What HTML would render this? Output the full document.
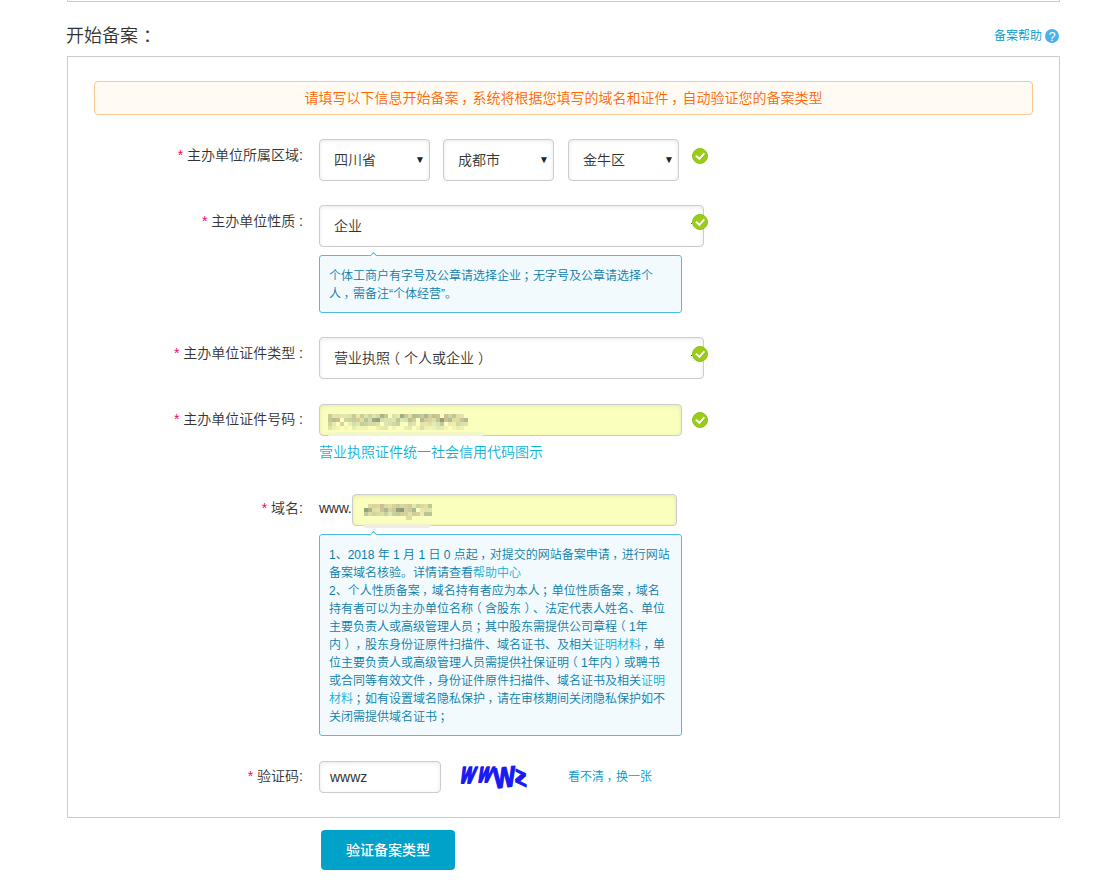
<!DOCTYPE html>
<html lang="zh-CN">
<head>
<meta charset="utf-8">
<title>开始备案</title>
<style>
*{box-sizing:border-box;margin:0;padding:0}
html,body{width:1105px;height:893px;background:#fff;overflow:hidden}
body{position:relative;font-family:"Liberation Sans","Noto Sans CJK SC",sans-serif;font-size:13px;color:#333;font-weight:350}
.abs{position:absolute}
.p{position:relative}
.pc{left:.2em}
.pl{left:-.28em}
.pr{left:.28em}
.topline{left:67px;top:0;width:993px;height:2px;border-bottom:1px solid #ccc;border-left:1px solid #ccc;border-right:1px solid #ccc}
h2{position:absolute;left:66px;top:22px;font-size:18px;font-weight:350;color:#333;line-height:28px;white-space:nowrap}
.help{position:absolute;left:994px;top:27px;font-size:12px;color:#09c;line-height:18px;white-space:nowrap}
.qicon{position:absolute;left:1045px;top:29px;width:14px;height:14px}
.box{position:absolute;left:67px;top:56px;width:993px;height:762px;border:1px solid #ccc;background:#fff}
.alert{position:absolute;left:94px;top:81px;width:939px;height:34px;border:1px solid #fbc890;border-radius:4px;background:#fffbf4;color:#f60;font-size:14px;line-height:32px;text-align:center;white-space:nowrap}
.lbl{position:absolute;right:802px;font-size:14px;line-height:20px;color:#333;white-space:nowrap;text-align:right}
.lbl i{font-style:normal;color:#f06}
.sel{position:absolute;top:139px;height:42px;border:1px solid #ccc;border-radius:4px;background:#fff;box-shadow:inset 0 1px 4px rgba(0,0,0,.09);font-size:14px;line-height:40px;padding-left:14px;color:#333;white-space:nowrap}
.sel b{position:absolute;right:4px;top:0;font-size:10px;font-weight:400;color:#222}
.inp{position:absolute;border:1px solid #ccc;border-radius:4px;background:#fff;font-size:14px;color:#333;padding-left:13px;white-space:nowrap;box-shadow:inset 0 1px 4px rgba(0,0,0,.09)}
.yel{background:#faffbd}
.ok{position:absolute;width:16px;height:16px}
.tip{position:absolute;left:319px;width:363px;border:1px solid #4dbde8;border-radius:3px;background:#f2fafe;color:#0c7ca8;font-size:12px;line-height:18px;padding:11px 0 0 9px;white-space:nowrap;text-spacing-trim:space-all}
.tip a{color:#0bb3d9;text-decoration:none}
.tip:before{content:"";position:absolute;left:51px;top:-3px;width:4px;height:4px;background:#fff;border-left:1px solid #4dbde8;border-top:1px solid #4dbde8;transform:rotate(45deg)}
.lnk{position:absolute;color:#0bb3d9;font-size:14px;line-height:20px;white-space:nowrap}
.btn{position:absolute;left:321px;top:830px;width:134px;height:40px;border-radius:4px;background:#00a2ca;color:#fff;font-size:14px;font-weight:500;line-height:40px;text-align:center;white-space:nowrap}
</style>
</head>
<body>
<div class="abs topline"></div>
<h2>开始备案<span class="p pr">：</span></h2>
<div class="help">备案帮助</div>
<svg class="qicon" viewBox="0 0 14 14"><circle cx="7" cy="7" r="7" fill="#4ab2ea"/><text x="7" y="11.7" font-size="13" font-weight="400" text-anchor="middle" fill="#fff" font-family="Liberation Sans, sans-serif">?</text></svg>
<div class="box"></div>
<div class="alert">请填写以下信息开始备案<span class="p pc">，</span>系统将根据您填写的域名和证件<span class="p pc">，</span>自动验证您的备案类型</div>

<div class="lbl" style="top:145px"><i>*</i> 主办单位所属区域:</div>
<div class="sel" style="left:319px;width:111px">四川省<b>▼</b></div>
<div class="sel" style="left:443px;width:111px">成都市<b>▼</b></div>
<div class="sel" style="left:568px;width:111px">金牛区<b>▼</b></div>

<div class="lbl" style="top:211px"><i>*</i> 主办单位性质 :</div>
<div class="inp" style="left:319px;top:205px;width:385px;height:42px;line-height:40px;padding-left:14px">企业</div>
<div class="tip" style="top:255px;height:58px">个体工商户有字号及公章请选择企业<span class="p pc">；</span>无字号及公章请选择个<br>
人<span class="p pc">，</span>需备注“个体经营”。</div>

<div class="lbl" style="top:343px"><i>*</i> 主办单位证件类型 :</div>
<div class="inp" style="left:319px;top:337px;width:385px;height:42px;line-height:40px;padding-left:14px">营业执照<span class="p pl">（</span>个人或企业<span class="p pr">）</span></div>

<div class="lbl" style="top:409px"><i>*</i> 主办单位证件号码 :</div>
<div class="inp yel" style="left:319px;top:404px;width:363px;height:32px;line-height:30px"></div>
<svg class="abs" style="left:328px;top:414px" width="140" height="16" viewBox="0 0 140 16" shape-rendering="crispEdges"><rect x="0" y="0" width="4" height="4" fill="#a9b287" opacity="0.64"/><rect x="4" y="0" width="4" height="4" fill="#d9cc8e" opacity="0.54"/><rect x="8" y="0" width="4" height="4" fill="#d9cc8e" opacity="0.58"/><rect x="12" y="0" width="4" height="4" fill="#c8cf9e" opacity="0.53"/><rect x="16" y="0" width="4" height="4" fill="#c8cf9e" opacity="0.53"/><rect x="20" y="0" width="4" height="4" fill="#d7d59c" opacity="0.72"/><rect x="24" y="0" width="4" height="4" fill="#b5b48a" opacity="0.71"/><rect x="28" y="0" width="4" height="4" fill="#d7d59c" opacity="0.53"/><rect x="32" y="0" width="4" height="4" fill="#bfae86" opacity="0.65"/><rect x="36" y="0" width="4" height="4" fill="#b9d6b0" opacity="0.61"/><rect x="40" y="0" width="4" height="4" fill="#a9b287" opacity="0.55"/><rect x="44" y="0" width="4" height="4" fill="#d7d59c" opacity="0.64"/><rect x="48" y="0" width="4" height="4" fill="#c9c796" opacity="0.70"/><rect x="52" y="0" width="4" height="4" fill="#8f9a78" opacity="0.74"/><rect x="56" y="0" width="4" height="4" fill="#9fb08a" opacity="0.67"/><rect x="64" y="0" width="4" height="4" fill="#d7d59c" opacity="0.78"/><rect x="68" y="0" width="4" height="4" fill="#d7d59c" opacity="0.54"/><rect x="72" y="0" width="4" height="4" fill="#8f9a78" opacity="0.81"/><rect x="76" y="0" width="4" height="4" fill="#bfae86" opacity="0.72"/><rect x="80" y="0" width="4" height="4" fill="#d9cc8e" opacity="0.65"/><rect x="84" y="0" width="4" height="4" fill="#a9b287" opacity="0.83"/><rect x="88" y="0" width="4" height="4" fill="#7f8f72" opacity="0.54"/><rect x="92" y="0" width="4" height="4" fill="#9fb08a" opacity="0.63"/><rect x="96" y="0" width="4" height="4" fill="#8f9a78" opacity="0.71"/><rect x="100" y="0" width="4" height="4" fill="#c9c796" opacity="0.83"/><rect x="104" y="0" width="4" height="4" fill="#7f8f72" opacity="0.53"/><rect x="108" y="0" width="4" height="4" fill="#bfae86" opacity="0.73"/><rect x="116" y="0" width="4" height="4" fill="#bfae86" opacity="0.75"/><rect x="120" y="0" width="4" height="4" fill="#9fb08a" opacity="0.52"/><rect x="124" y="0" width="4" height="4" fill="#a9b287" opacity="0.72"/><rect x="128" y="0" width="4" height="4" fill="#d7d59c" opacity="0.77"/><rect x="132" y="0" width="4" height="4" fill="#d7d59c" opacity="0.65"/><rect x="0" y="4" width="4" height="4" fill="#a9b287" opacity="0.70"/><rect x="4" y="4" width="4" height="4" fill="#a9b287" opacity="0.83"/><rect x="8" y="4" width="4" height="4" fill="#bfae86" opacity="0.79"/><rect x="16" y="4" width="4" height="4" fill="#c8cf9e" opacity="0.88"/><rect x="20" y="4" width="4" height="4" fill="#a9b287" opacity="0.59"/><rect x="24" y="4" width="4" height="4" fill="#b5b48a" opacity="0.71"/><rect x="28" y="4" width="4" height="4" fill="#bfae86" opacity="0.64"/><rect x="32" y="4" width="4" height="4" fill="#d9cc8e" opacity="0.67"/><rect x="36" y="4" width="4" height="4" fill="#a9b287" opacity="0.79"/><rect x="40" y="4" width="4" height="4" fill="#b9d6b0" opacity="0.78"/><rect x="44" y="4" width="4" height="4" fill="#8f9a78" opacity="0.86"/><rect x="48" y="4" width="4" height="4" fill="#7f8f72" opacity="0.83"/><rect x="52" y="4" width="4" height="4" fill="#c8cf9e" opacity="0.68"/><rect x="56" y="4" width="4" height="4" fill="#c8cf9e" opacity="0.56"/><rect x="60" y="4" width="4" height="4" fill="#d7d59c" opacity="0.70"/><rect x="64" y="4" width="4" height="4" fill="#b9d6b0" opacity="0.56"/><rect x="68" y="4" width="4" height="4" fill="#a9b287" opacity="0.73"/><rect x="72" y="4" width="4" height="4" fill="#b9d6b0" opacity="0.55"/><rect x="76" y="4" width="4" height="4" fill="#b9d6b0" opacity="0.68"/><rect x="80" y="4" width="4" height="4" fill="#9fb08a" opacity="0.76"/><rect x="84" y="4" width="4" height="4" fill="#c9c796" opacity="0.85"/><rect x="92" y="4" width="4" height="4" fill="#8f9a78" opacity="0.65"/><rect x="96" y="4" width="4" height="4" fill="#c2b48c" opacity="0.66"/><rect x="100" y="4" width="4" height="4" fill="#c2b48c" opacity="0.60"/><rect x="104" y="4" width="4" height="4" fill="#d9cc8e" opacity="0.67"/><rect x="108" y="4" width="4" height="4" fill="#b5b48a" opacity="0.81"/><rect x="112" y="4" width="4" height="4" fill="#7f8f72" opacity="0.85"/><rect x="116" y="4" width="4" height="4" fill="#bfae86" opacity="0.73"/><rect x="120" y="4" width="4" height="4" fill="#9fb08a" opacity="0.82"/><rect x="124" y="4" width="4" height="4" fill="#d9cc8e" opacity="0.66"/><rect x="128" y="4" width="4" height="4" fill="#d7d59c" opacity="0.83"/><rect x="132" y="4" width="4" height="4" fill="#c2b48c" opacity="0.83"/><rect x="136" y="4" width="4" height="4" fill="#8f9a78" opacity="0.67"/><rect x="0" y="8" width="4" height="4" fill="#b5b48a" opacity="0.55"/><rect x="4" y="8" width="4" height="4" fill="#d7d59c" opacity="0.53"/><rect x="12" y="8" width="4" height="4" fill="#c2b48c" opacity="0.60"/><rect x="20" y="8" width="4" height="4" fill="#d7d59c" opacity="0.38"/><rect x="24" y="8" width="4" height="4" fill="#9fb08a" opacity="0.41"/><rect x="28" y="8" width="4" height="4" fill="#b9d6b0" opacity="0.56"/><rect x="32" y="8" width="4" height="4" fill="#7f8f72" opacity="0.44"/><rect x="36" y="8" width="4" height="4" fill="#7f8f72" opacity="0.39"/><rect x="40" y="8" width="4" height="4" fill="#c2b48c" opacity="0.54"/><rect x="44" y="8" width="4" height="4" fill="#a9b287" opacity="0.46"/><rect x="48" y="8" width="4" height="4" fill="#c9c796" opacity="0.55"/><rect x="56" y="8" width="4" height="4" fill="#c8cf9e" opacity="0.54"/><rect x="60" y="8" width="4" height="4" fill="#a9b287" opacity="0.40"/><rect x="64" y="8" width="4" height="4" fill="#a9b287" opacity="0.50"/><rect x="68" y="8" width="4" height="4" fill="#7f8f72" opacity="0.40"/><rect x="80" y="8" width="4" height="4" fill="#9fb08a" opacity="0.40"/><rect x="84" y="8" width="4" height="4" fill="#b5b48a" opacity="0.36"/><rect x="92" y="8" width="4" height="4" fill="#d9cc8e" opacity="0.54"/><rect x="96" y="8" width="4" height="4" fill="#d7d59c" opacity="0.56"/><rect x="100" y="8" width="4" height="4" fill="#bfae86" opacity="0.41"/><rect x="104" y="8" width="4" height="4" fill="#b9d6b0" opacity="0.44"/><rect x="108" y="8" width="4" height="4" fill="#a9b287" opacity="0.37"/><rect x="112" y="8" width="4" height="4" fill="#8f9a78" opacity="0.52"/><rect x="120" y="8" width="4" height="4" fill="#d9cc8e" opacity="0.39"/><rect x="124" y="8" width="4" height="4" fill="#d9cc8e" opacity="0.36"/><rect x="128" y="8" width="4" height="4" fill="#a9b287" opacity="0.51"/><rect x="132" y="8" width="4" height="4" fill="#a9b287" opacity="0.40"/><rect x="136" y="8" width="4" height="4" fill="#c2b48c" opacity="0.39"/><rect x="0" y="12" width="4" height="4" fill="#7f8f72" opacity="0.24"/><rect x="4" y="12" width="4" height="4" fill="#c9c796" opacity="0.29"/><rect x="8" y="12" width="4" height="4" fill="#d7d59c" opacity="0.21"/><rect x="16" y="12" width="4" height="4" fill="#d9cc8e" opacity="0.18"/><rect x="24" y="12" width="4" height="4" fill="#9fb08a" opacity="0.25"/><rect x="28" y="12" width="4" height="4" fill="#d9cc8e" opacity="0.20"/><rect x="32" y="12" width="4" height="4" fill="#d9cc8e" opacity="0.24"/><rect x="36" y="12" width="4" height="4" fill="#d7d59c" opacity="0.26"/><rect x="48" y="12" width="4" height="4" fill="#d9cc8e" opacity="0.29"/><rect x="52" y="12" width="4" height="4" fill="#8f9a78" opacity="0.20"/><rect x="56" y="12" width="4" height="4" fill="#8f9a78" opacity="0.22"/><rect x="64" y="12" width="4" height="4" fill="#d7d59c" opacity="0.26"/><rect x="76" y="12" width="4" height="4" fill="#c2b48c" opacity="0.26"/><rect x="80" y="12" width="4" height="4" fill="#bfae86" opacity="0.29"/><rect x="88" y="12" width="4" height="4" fill="#c9c796" opacity="0.23"/><rect x="92" y="12" width="4" height="4" fill="#7f8f72" opacity="0.28"/><rect x="96" y="12" width="4" height="4" fill="#c8cf9e" opacity="0.30"/><rect x="100" y="12" width="4" height="4" fill="#c8cf9e" opacity="0.20"/><rect x="104" y="12" width="4" height="4" fill="#c2b48c" opacity="0.22"/><rect x="108" y="12" width="4" height="4" fill="#8f9a78" opacity="0.23"/><rect x="112" y="12" width="4" height="4" fill="#9fb08a" opacity="0.24"/><rect x="116" y="12" width="4" height="4" fill="#c9c796" opacity="0.19"/><rect x="124" y="12" width="4" height="4" fill="#c9c796" opacity="0.19"/><rect x="128" y="12" width="4" height="4" fill="#a9b287" opacity="0.21"/><rect x="132" y="12" width="4" height="4" fill="#c8cf9e" opacity="0.28"/></svg>
<div class="abs" style="left:327px;top:432px;width:157px;height:4px;background:#f3f6c6;border-radius:0 0 3px 3px"></div>
<div class="lnk" style="left:319px;top:442px">营业执照证件统一社会信用代码图示</div>

<div class="lbl" style="top:498px"><i>*</i> 域名:</div>
<div class="lnk" style="left:319px;top:498px;color:#333;letter-spacing:-.25px">www.</div>
<div class="abs" style="left:372px;top:528px;width:4px;height:5px;background:#e6f4fc"></div>
<div class="inp yel" style="left:352px;top:494px;width:325px;height:32px;line-height:30px"></div>
<svg class="abs" style="left:364px;top:504px" width="68" height="12" viewBox="0 0 68 12" shape-rendering="crispEdges"><rect x="4" y="0" width="4" height="4" fill="#d9cc8e" opacity="0.77"/><rect x="8" y="0" width="4" height="4" fill="#c2b48c" opacity="0.58"/><rect x="12" y="0" width="4" height="4" fill="#c2b48c" opacity="0.54"/><rect x="16" y="0" width="4" height="4" fill="#bfae86" opacity="0.78"/><rect x="20" y="0" width="4" height="4" fill="#bfae86" opacity="0.51"/><rect x="24" y="0" width="4" height="4" fill="#c9c796" opacity="0.56"/><rect x="28" y="0" width="4" height="4" fill="#b5b48a" opacity="0.59"/><rect x="32" y="0" width="4" height="4" fill="#bfae86" opacity="0.68"/><rect x="36" y="0" width="4" height="4" fill="#c2b48c" opacity="0.56"/><rect x="40" y="0" width="4" height="4" fill="#a9b287" opacity="0.56"/><rect x="44" y="0" width="4" height="4" fill="#bfae86" opacity="0.68"/><rect x="48" y="0" width="4" height="4" fill="#d7d59c" opacity="0.57"/><rect x="52" y="0" width="4" height="4" fill="#a9b287" opacity="0.57"/><rect x="56" y="0" width="4" height="4" fill="#bfae86" opacity="0.49"/><rect x="60" y="0" width="4" height="4" fill="#d9cc8e" opacity="0.66"/><rect x="64" y="0" width="4" height="4" fill="#8f9a78" opacity="0.56"/><rect x="0" y="4" width="4" height="4" fill="#7f8f72" opacity="0.83"/><rect x="4" y="4" width="4" height="4" fill="#8f9a78" opacity="0.74"/><rect x="8" y="4" width="4" height="4" fill="#d9cc8e" opacity="0.65"/><rect x="12" y="4" width="4" height="4" fill="#d7d59c" opacity="0.66"/><rect x="16" y="4" width="4" height="4" fill="#c2b48c" opacity="0.80"/><rect x="20" y="4" width="4" height="4" fill="#9fb08a" opacity="0.89"/><rect x="24" y="4" width="4" height="4" fill="#b5b48a" opacity="0.57"/><rect x="28" y="4" width="4" height="4" fill="#bfae86" opacity="0.70"/><rect x="32" y="4" width="4" height="4" fill="#7f8f72" opacity="0.84"/><rect x="36" y="4" width="4" height="4" fill="#7f8f72" opacity="0.89"/><rect x="40" y="4" width="4" height="4" fill="#c2b48c" opacity="0.65"/><rect x="44" y="4" width="4" height="4" fill="#a9b287" opacity="0.64"/><rect x="48" y="4" width="4" height="4" fill="#9fb08a" opacity="0.89"/><rect x="56" y="4" width="4" height="4" fill="#d7d59c" opacity="0.55"/><rect x="60" y="4" width="4" height="4" fill="#d7d59c" opacity="0.67"/><rect x="64" y="4" width="4" height="4" fill="#c8cf9e" opacity="0.57"/><rect x="0" y="8" width="4" height="4" fill="#7f8f72" opacity="0.48"/><rect x="4" y="8" width="4" height="4" fill="#b5b48a" opacity="0.45"/><rect x="8" y="8" width="4" height="4" fill="#a9b287" opacity="0.53"/><rect x="12" y="8" width="4" height="4" fill="#b5b48a" opacity="0.50"/><rect x="16" y="8" width="4" height="4" fill="#c9c796" opacity="0.58"/><rect x="20" y="8" width="4" height="4" fill="#a9b287" opacity="0.60"/><rect x="24" y="8" width="4" height="4" fill="#b9d6b0" opacity="0.53"/><rect x="28" y="8" width="4" height="4" fill="#8f9a78" opacity="0.46"/><rect x="32" y="8" width="4" height="4" fill="#7f8f72" opacity="0.46"/><rect x="36" y="8" width="4" height="4" fill="#c2b48c" opacity="0.67"/><rect x="40" y="8" width="4" height="4" fill="#c2b48c" opacity="0.62"/><rect x="44" y="8" width="4" height="4" fill="#d9cc8e" opacity="0.63"/><rect x="48" y="8" width="4" height="4" fill="#b5b48a" opacity="0.65"/><rect x="52" y="8" width="4" height="4" fill="#c2b48c" opacity="0.61"/><rect x="56" y="8" width="4" height="4" fill="#d7d59c" opacity="0.44"/><rect x="60" y="8" width="4" height="4" fill="#7f8f72" opacity="0.52"/><rect x="64" y="8" width="4" height="4" fill="#8f9a78" opacity="0.58"/></svg>
<div class="abs" style="left:363px;top:524px;width:68px;height:4px;background:#efefdc;border-radius:0 0 3px 3px"></div><div class="abs" style="left:406px;top:516px;width:6px;height:4px;background:#dcdca8"></div>
<div class="tip" style="top:534px;height:202px">1、2018 年 1 月 1 日 0 点起<span class="p pc">，</span>对提交的网站备案申请<span class="p pc">，</span>进行网站<br>
备案域名核验。详情请查看<a>帮助中心</a><br>
2、个人性质备案<span class="p pc">，</span>域名持有者应为本人<span class="p pc">；</span>单位性质备案<span class="p pc">，</span>域名<br>
持有者可以为主办单位名称<span class="p pl">（</span>含股东<span class="p pr">）</span>、法定代表人姓名、单位<br>
主要负责人或高级管理人员<span class="p pc">；</span>其中股东需提供公司章程<span class="p pl">（</span>1年<br>
内<span class="p pr">）</span><span class="p pc">，</span>股东身份证原件扫描件、域名证书、及相关<a>证明材料</a><span class="p pc">，</span>单<br>
位主要负责人或高级管理人员需提供社保证明<span class="p pl">（</span>1年内<span class="p pr">）</span>或聘书<br>
或合同等有效文件<span class="p pc">，</span>身份证件原件扫描件、域名证书及相关<a>证明</a><br>
<a>材料</a><span class="p pc">；</span>如有设置域名隐私保护<span class="p pc">，</span>请在审核期间关闭隐私保护如不<br>
关闭需提供域名证书<span class="p pc">；</span></div>

<div class="lbl" style="top:766px"><i>*</i> 验证码:</div>
<div class="inp" style="left:319px;top:761px;width:122px;height:32px;line-height:30px;padding-left:10px">wwwz</div>
<svg class="abs" style="left:450px;top:755px" width="90" height="45" viewBox="0 0 90 45" font-family="Liberation Sans, sans-serif" font-weight="700" fill="#1a1af0" stroke="#1a1af0" stroke-width="1.9" stroke-linejoin="round">
<text transform="translate(8.8,28.2) skewX(-16) scale(.66,1)" font-size="23">W</text>
<text transform="translate(26.3,26.8) skewX(-18) scale(.68,1)" font-size="21.5">W</text>
<text transform="translate(44,33.5) rotate(-7) skewX(-4) scale(.82,1)" font-size="28.5" stroke-width="1.5">W</text>
<text transform="translate(64.5,26.5) skewY(25)" font-size="25" stroke-width="1">z</text>
</svg>
<div class="lnk" style="left:568px;top:767px;font-size:12px;color:#09c">看不清<span class="p pc">，</span>换一张</div>

<div class="abs" style="left:691px;top:223px;width:1px;height:1px;background:#4a4e66"></div><div class="abs" style="left:692px;top:226px;width:1px;height:1px;background:#d4d4e2"></div><div class="abs" style="left:693px;top:228px;width:1px;height:1px;background:#dcdce6"></div>
<div class="abs" style="left:691px;top:355px;width:1px;height:1px;background:#4a4e66"></div><div class="abs" style="left:692px;top:358px;width:1px;height:1px;background:#d4d4e2"></div><div class="abs" style="left:693px;top:360px;width:1px;height:1px;background:#dcdce6"></div>
<svg class="ok" style="left:692px;top:148px" viewBox="0 0 16 16"><circle cx="8" cy="8" r="7.5" fill="#9ccd16" stroke="#88c21c"/><path d="M7.9 11.5 L12.9 6" fill="none" stroke="#6f9a14" stroke-width="1.6" opacity=".75"/><path d="M3.9 7.7 L7.6 10.9 L12.4 5.4" fill="none" stroke="#fff" stroke-width="2"/></svg>
<svg class="ok" style="left:692px;top:214px" viewBox="0 0 16 16"><circle cx="8" cy="8" r="7.5" fill="#9ccd16" stroke="#88c21c"/><path d="M7.9 11.5 L12.9 6" fill="none" stroke="#6f9a14" stroke-width="1.6" opacity=".75"/><path d="M3.9 7.7 L7.6 10.9 L12.4 5.4" fill="none" stroke="#fff" stroke-width="2"/></svg>
<svg class="ok" style="left:692px;top:346px" viewBox="0 0 16 16"><circle cx="8" cy="8" r="7.5" fill="#9ccd16" stroke="#88c21c"/><path d="M7.9 11.5 L12.9 6" fill="none" stroke="#6f9a14" stroke-width="1.6" opacity=".75"/><path d="M3.9 7.7 L7.6 10.9 L12.4 5.4" fill="none" stroke="#fff" stroke-width="2"/></svg>
<svg class="ok" style="left:692px;top:412px" viewBox="0 0 16 16"><circle cx="8" cy="8" r="7.5" fill="#9ccd16" stroke="#88c21c"/><path d="M7.9 11.5 L12.9 6" fill="none" stroke="#6f9a14" stroke-width="1.6" opacity=".75"/><path d="M3.9 7.7 L7.6 10.9 L12.4 5.4" fill="none" stroke="#fff" stroke-width="2"/></svg>
<div class="btn">验证备案类型</div>
</body>
</html>
